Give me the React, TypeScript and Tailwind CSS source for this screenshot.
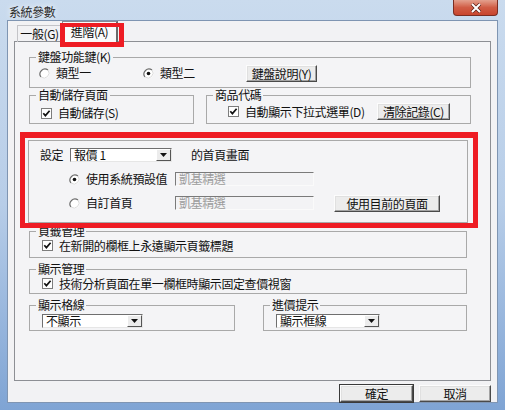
import type { ReactNode } from "react";

const Check = ({ label }: { label: string }) => (
    <label className="flex items-center gap-[6px] h-full">
        <svg width="11" height="11" viewBox="0 0 11 11" className="shrink-0">
            <rect x="0.5" y="0.5" width="10" height="10" fill="#fff" stroke="#7d7d7d" />
            <path d="M2.3 5.2 L4.4 7.6 L8.6 2.8" fill="none" stroke="#111" strokeWidth="1.7" />
        </svg>
        <span>{label}</span>
    </label>
);

const Radio = ({ label, on = false }: { label: string; on?: boolean }) => (
    <label className="flex items-center gap-[6px] h-full">
        <svg width="11" height="11" viewBox="0 0 11 11" className="shrink-0">
            <circle cx="5.5" cy="5.5" r="5" fill="#fff" />
            <path d="M9 2 A5 5 0 0 0 2 9" fill="none" stroke="#6e6e6e" strokeWidth="1.2" />
            <path d="M2 9 A5 5 0 0 0 9 2" fill="none" stroke="#dcdcdc" strokeWidth="1" />
            {on && <circle cx="5.5" cy="5.5" r="1.8" fill="#111" />}
        </svg>
        <span>{label}</span>
    </label>
);

const Btn = ({ children, className = "" }: { children: ReactNode; className?: string }) => (
    <button className={`h-[17px] bg-[#ececec] border border-t-[#fcfcfc] border-l-[#fcfcfc] border-r-[#4a4a4a] border-b-[#4a4a4a] shadow-[inset_-1px_-1px_0_#a3a3a3,inset_1px_1px_0_#e0e0e0] leading-[13px] text-[12px] ${className}`}>
        {children}
    </button>
);

const Combo = ({ value, className = "" }: { value: string; className?: string }) => (
    <div className={`flex h-[14px] bg-white border border-t-[#6f6f6f] border-l-[#6f6f6f] border-r-[#e6e6e6] border-b-[#e6e6e6] ${className}`}>
        <span className="flex-1 pl-[3px] leading-[12px]">{value}</span>
        <span className="w-[15px] flex items-center justify-center bg-[#ececec] border border-t-[#fff] border-l-[#fff] border-r-[#555] border-b-[#555]">
            <svg width="7" height="4" viewBox="0 0 7 4"><path d="M0 0 H7 L3.5 4 Z" fill="#111" /></svg>
        </span>
    </div>
);

const Field = ({ value }: { value: string }) => (
    <div className="w-[139px] h-[14px] border border-t-[#7a7a7a] border-l-[#7a7a7a] border-r-[#fafafa] border-b-[#fafafa] bg-[#f3f3f5] text-[#9c9c9c] pl-[3px] leading-[12px]">
        {value}
    </div>
);

const Group = ({ title, className = "", children }: { title: string; className?: string; children?: ReactNode }) => (
    <fieldset className={`min-w-0 border border-[#a9a9a9] ${className}`}>
        <legend className="ml-[6px] px-[2px] leading-[14px]">{title}</legend>
        {children}
    </fieldset>
);

const App = () => {
    return (
        <div className="w-[505px] h-[410px] flex flex-col overflow-hidden bg-linear-to-b from-[#cadbee] via-[#b7cde8] to-[#7fa4d4] font-['Noto_Sans_CJK_TC','Noto_Sans',sans-serif] text-[12px] leading-[14px] tracking-[-0.4px] text-[#111]">
            {/* title bar */}
            <div className="h-[20px] shrink-0 flex justify-between pl-[9px] pr-[7px]">
                <span className="pt-[5px] text-[#2c2c2c] [text-shadow:0_0_6px_#fff]">系統參數</span>
                <div className="w-[45px] h-[16px] flex items-center justify-center rounded-b-[4px] border border-t-0 border-[#7a2d22] bg-linear-to-b from-[#e3a08e] via-[#d05c45] to-[#c8452e]">
                    <svg width="12" height="10" viewBox="0 0 12 10">
                        <path d="M2 1 L10 9 M10 1 L2 9" stroke="#5a1f17" strokeWidth="3.4" />
                        <path d="M2 1 L10 9 M10 1 L2 9" stroke="#fff" strokeWidth="2" />
                    </svg>
                </div>
            </div>

            <div className="flex h-[383px] pl-[7px]">
                {/* client */}
                <div className="w-[491px] h-[383px] border border-[#7f95b2] bg-[#f2f2f4] flex flex-col pl-[6px]">
                    {/* tab strip */}
                    <div className="relative h-[20px] flex items-end pl-[3px]">
                        <div className="w-[45px] h-[17px] mb-[-1px] flex items-center justify-center border border-b-0 border-[#c4c4c8]">一般(G)</div>
                        <div className="relative z-10 w-[56px] h-[21px] mb-[-1px] flex items-center justify-center bg-[#fafafb] border border-b-0 border-[#898c95] border-r-[#6a6a6a] border-r-2">進階(A)</div>
                        <div className="absolute z-20 left-[46px] top-[2px] w-[64px] h-[24px] border-[5px] border-t-[4px] border-[#ee1c24]" />
                    </div>

                    {/* panel */}
                    <div className="w-[477px] h-[340px] border border-[#8d8f94] bg-[#f4f4f6] flex flex-col pl-[14px]">
                        <Group title="鍵盤功能鍵(K)" className="mt-[8px] w-[442px] pb-[5px]">
                            <div className="flex items-center h-[18px] pl-[9px]">
                                <div className="w-[104px] h-full"><Radio label="類型一" /></div>
                                <div className="w-[103px] h-full"><Radio label="類型二" on /></div>
                                <Btn className="w-[71px]">鍵盤說明(Y)</Btn>
                            </div>
                        </Group>

                        <div className="flex items-start gap-[12px]">
                            <Group title="自動儲存頁面" className="w-[165px] pb-[2px]">
                                <div className="h-[16px] mt-[3px] pl-[11px]"><Check label="自動儲存(S)" /></div>
                            </Group>
                            <Group title="商品代碼" className="w-[265px] pb-[3px]">
                                <div className="flex items-center h-[17px] mt-[1px] pl-[21px]">
                                    <div className="w-[149px] h-full"><Check label="自動顯示下拉式選單(D)" /></div>
                                    <Btn className="w-[73px]">清除記錄(C)</Btn>
                                </div>
                            </Group>
                        </div>

                        {/* highlighted home page settings */}
                        <div className="relative z-10 mt-[8px] -ml-[9px] w-[458px] h-[96px] border-[5px] border-t-[6px] border-[#ee1c24] pl-[3px] pt-[2px]">
                            <div className="w-[440px] h-[83px] border border-[#a9a9a9] flex flex-col">
                                <div className="flex items-center h-[16px] mt-[6px] pl-[11px]">
                                    <span className="w-[30px]">設定</span>
                                    <Combo value="報價 1" className="w-[102px]" />
                                    <span className="ml-[19px]">的首頁畫面</span>
                                </div>
                                <div className="flex items-center h-[16px] mt-[8px] pl-[40px]">
                                    <div className="w-[106px] h-full"><Radio label="使用系統預設值" on /></div>
                                    <Field value="凱基精選" />
                                </div>
                                <div className="flex items-center h-[18px] mt-[7px] pl-[40px]">
                                    <div className="w-[106px] h-full"><Radio label="自訂首頁" /></div>
                                    <Field value="凱基精選" />
                                    <Btn className="ml-[20px] w-[106px]">使用目前的頁面</Btn>
                                </div>
                            </div>
                        </div>

                        <Group title="頁籤管理" className="-mt-[4px] w-[438px] pb-[4px]">
                            <div className="h-[15px] pl-[12px]"><Check label="在新開的欄框上永遠顯示頁籤標題" /></div>
                        </Group>

                        <Group title="顯示管理" className="mt-[4px] w-[438px] pb-[2px]">
                            <div className="h-[15px] pl-[12px]"><Check label="技術分析頁面在單一欄框時顯示固定查價視窗" /></div>
                        </Group>

                        <div className="flex items-start gap-[28px] mt-[4px]">
                            <Group title="顯示格線" className="w-[206px] pb-[2px]">
                                <div className="mt-[2px] pl-[12px]"><Combo value="不顯示" className="w-[101px]" /></div>
                            </Group>
                            <Group title="進價提示" className="w-[204px] pb-[2px]">
                                <div className="mt-[2px] pl-[12px]"><Combo value="顯示框線" className="w-[104px]" /></div>
                            </Group>
                        </div>
                    </div>

                    {/* dialog buttons */}
                    <div className="flex gap-[6px] mt-[4px] w-[477px] justify-end">
                        <Btn className="w-[73px] h-[16px] outline outline-1 outline-[#3a3a3a]">確定</Btn>
                        <Btn className="w-[72px] h-[16px]">取消</Btn>
                    </div>
                </div>
            </div>
        </div>
    );
};

export default App;
